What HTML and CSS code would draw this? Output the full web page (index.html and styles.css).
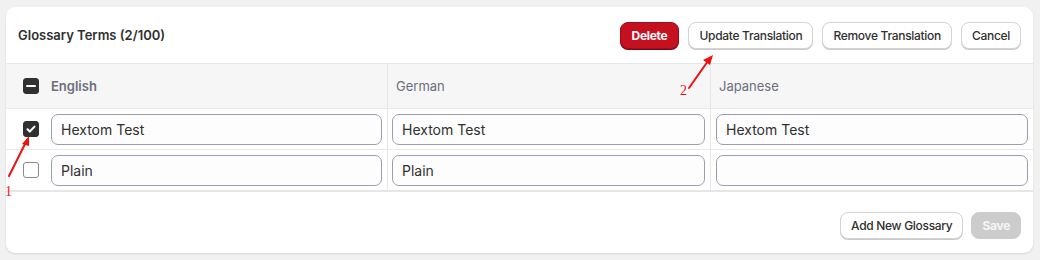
FILE: index.html
```html
<!DOCTYPE html>
<html lang="en">
<head>
    <meta charset="UTF-8">
    <title>Glossary Terms</title>
    <link rel="stylesheet" href="styles.css">
</head>
<body>
    <div class="card">
        <div class="card-header">
            <h2 class="title">Glossary Terms (2/100)</h2>
            <div class="actions">
                <button class="btn btn-danger">Delete</button>
                <button class="btn">Update Translation</button>
                <button class="btn">Remove Translation</button>
                <button class="btn">Cancel</button>
            </div>
        </div>

        <div class="grid">
            <div class="cell head first">
                <span class="check partial"></span>
                <span class="lang main">English</span>
            </div>
            <div class="cell head"><span class="lang">German</span></div>
            <div class="cell head last"><span class="lang">Japanese</span></div>

            <div class="cell first">
                <span class="check checked">
                    <svg viewBox="0 0 16 16" width="16" height="16"><path d="M4 8.3l2.6 2.6L12 5.3" fill="none" stroke="#fff" stroke-width="2.4" stroke-linecap="round" stroke-linejoin="round"/></svg>
                </span>
                <input class="field" type="text" value="Hextom Test">
            </div>
            <div class="cell"><input class="field" type="text" value="Hextom Test"></div>
            <div class="cell last"><input class="field" type="text" value="Hextom Test"></div>

            <div class="cell first end">
                <span class="check"></span>
                <input class="field" type="text" value="Plain">
            </div>
            <div class="cell end"><input class="field" type="text" value="Plain"></div>
            <div class="cell last end"><input class="field" type="text" value=""></div>
        </div>

        <div class="card-footer">
            <button class="btn">Add New Glossary</button>
            <button class="btn btn-disabled">Save</button>
        </div>
    </div>

    <!-- annotations drawn over the screenshot -->
    <svg class="notes" width="1040" height="260" viewBox="0 0 1040 260">
        <g stroke="#ee1111" stroke-width="2" stroke-linecap="round">
            <line x1="9" y1="176" x2="26" y2="142"/>
            <line x1="689" y1="88" x2="708" y2="61"/>
        </g>
        <g fill="#ee1111">
            <polygon points="29,136 22,144 29,146"/>
            <polygon points="713,55 703,60 710,65"/>
            <text x="5" y="196" class="note-num">1</text>
            <text x="680" y="95" class="note-num">2</text>
        </g>
    </svg>
</body>
</html>
```

FILE: styles.css
```css
body {
    margin: 0;
    padding: 7px 7px 8px 6px;
    background-color: #f1f1f1;
    font-family: Inter, "Noto Sans", Arial, sans-serif;
    color: #303030;
    position: relative;
}
.card {
    background: #fff;
    border-radius: 9px;
    box-shadow: 0 1px 2px rgba(0,0,0,0.12);
    overflow: hidden;
}
.card-header {
    height: 56px;
    padding: 0 12px;
    display: flex;
    align-items: center;
    justify-content: space-between;
    border-bottom: 1px solid #e6e6e6;
}
.title {
    margin: 0;
    font-size: 13px;
    font-weight: 600;
    color: #303030;
}
.actions {
    display: flex;
    gap: 9px;
}
.btn {
    height: 27px;
    padding: 0 10px;
    font-family: inherit;
    font-size: 12px;
    font-weight: 500;
    letter-spacing: -0.3px;
    color: #303030;
    background: #fff;
    border: 1px solid #d4d4d4;
    border-radius: 8px;
    box-shadow: 0 1px 0 #c9c9c9;
    cursor: pointer;
}
.btn-danger {
    background: #c5111f;
    border-color: #a00d18;
    color: #fff;
    font-weight: 650;
    padding: 0 11px;
    box-shadow: 0 1px 0 #7d0a13;
}
.btn-disabled {
    background: #cccccc;
    border-color: #cccccc;
    color: #f6f6f6;
    font-weight: 650;
    box-shadow: none;
    padding: 0 10px;
}
.grid {
    display: grid;
    grid-template-columns: 382px 323px 1fr;
}
.cell {
    display: flex;
    align-items: center;
    height: 40px;
    padding: 0 5px 0 4px;
    border-right: 1px solid #e6e6e6;
    border-bottom: 1px solid #e9e9e9;
}
.cell.last {
    border-right: none;
    padding-left: 5px;
}
.cell.first {
    padding-left: 17px;
    gap: 12px;
}
.cell.head {
    height: 44px;
    background: #f6f6f6;
    padding-left: 8px;
}
.cell.head.first {
    padding-left: 17px;
    gap: 12px;
}
.cell.end {
    border-bottom: 2px solid #e6e6e6;
}
.lang {
    font-size: 13px;
    color: #6d6f7b;
}
.lang.main {
    font-weight: 600;
}
.check {
    flex: none;
    width: 14px;
    height: 14px;
    border: 1px solid #8a8a8a;
    border-radius: 3px;
    background: #fff;
    display: flex;
    align-items: center;
    justify-content: center;
}
.check.checked,
.check.partial {
    background: #303030;
    border-color: #303030;
}
.check.partial::before {
    content: "";
    width: 10px;
    height: 2px;
    background: #fff;
    border-radius: 1px;
}
.field {
    flex: 1;
    min-width: 0;
    height: 31px;
    box-sizing: border-box;
    padding: 0 9px;
    font-family: inherit;
    font-size: 14px;
    color: #303030;
    background: #fdfdfd;
    border: 1px solid #9c9eae;
    border-radius: 7px;
    outline: none;
}
.card-footer {
    height: 61px;
    box-sizing: border-box;
    padding: 6px 12px 0;
    display: flex;
    align-items: center;
    justify-content: flex-end;
    gap: 8px;
}
.notes {
    position: absolute;
    left: 0;
    top: 0;
    pointer-events: none;
}
.note-num {
    font-family: "Liberation Serif", serif;
    font-size: 14px;
}
```
